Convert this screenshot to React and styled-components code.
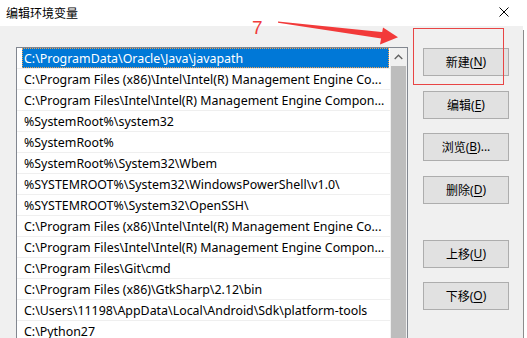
import React from "react";
import styled, { createGlobalStyle } from "styled-components";

const Global = createGlobalStyle`
  html, body { margin: 0; padding: 0; background: #ffffff; }
  body { font-family: "Noto Sans", "Noto Sans CJK SC", sans-serif; }
  * { box-sizing: border-box; }
`;

const Page = styled.div`
  position: relative;
  width: 527px;
  height: 338px;
  overflow: hidden;
  display: flex;
  flex-direction: column;
  font-family: "Noto Sans", "Noto Sans CJK SC", sans-serif;
  font-size: 12px;
  color: #000;
`;

const TitleBar = styled.div`
  height: 26px;
  flex: none;
  display: flex;
  align-items: center;
  justify-content: space-between;
  background: #ffffff;
  padding: 0 18px 2px 6px;
`;

const Title = styled.span`
  font-family: "Noto Sans CJK SC", sans-serif;
  font-size: 12px;
  color: #000;
`;

const Close = styled.svg`
  width: 10px;
  height: 10px;
  margin-top: -1px;
`;

const Main = styled.div`
  flex: 1;
  display: flex;
  min-height: 0;
`;

const Dialog = styled.div`
  flex: 1;
  background: #f0f0f0;
  display: flex;
  align-items: flex-start;
  padding: 21px 0 0 16px;
`;

const Strip = styled.div`
  width: 4px;
  flex: none;
  padding-top: 4px;
`;

const StripLine = styled.div`
  height: 100%;
  border-left: 1px solid #8c8c8c;
  background: #ffffff;
`;

const ListBox = styled.div`
  width: 392px;
  height: 340px;
  flex: none;
  border: 1px solid #828790;
  background: #ffffff;
  display: flex;
`;

const Rows = styled.div`
  flex: 1;
  display: flex;
  flex-direction: column;
  font-size: 12.4px;
`;

const Row = styled.div`
  height: 21px;
  flex: none;
  border-bottom: 1px solid #efefef;
  padding: 0 1px 0 5px;
  display: flex;
`;

const Label = styled.div`
  flex: 1;
  display: flex;
  align-items: center;
  padding-left: 2px;
  white-space: nowrap;
  overflow: hidden;
  background: ${(p) => (p.$selected ? "#0078d7" : "transparent")};
  color: ${(p) => (p.$selected ? "#ffffff" : "#000000")};
  outline: ${(p) => (p.$selected ? "1px dotted #f0a050" : "none")};
  outline-offset: -1px;
`;

const ScrollBar = styled.div`
  width: 17px;
  flex: none;
  background: #f0f0f0;
  display: flex;
  flex-direction: column;
  align-items: center;
`;

const ScrollArrow = styled.div`
  height: 18px;
  width: 100%;
  flex: none;
  display: flex;
  align-items: center;
  justify-content: center;
`;

const Thumb = styled.div`
  width: 15px;
  flex: 1;
  background: #bdbdbd;
`;

const Buttons = styled.div`
  display: flex;
  flex-direction: column;
  margin-left: 15px;
  padding-top: 1px;
`;

const Button = styled.button`
  width: 86px;
  height: 28px;
  margin-top: ${(p) => p.$gap || 0}px;
  border: 1px solid #adadad;
  background: #e1e1e1;
  font-family: "Noto Sans", "Noto Sans CJK SC", sans-serif;
  font-size: 12px;
  color: #000;
  padding: 0 0 1px;
  display: flex;
  align-items: center;
  justify-content: center;
  u { text-underline-offset: 2px; }
`;

const Overlay = styled.svg`
  position: absolute;
  left: 0;
  top: 0;
  width: 527px;
  height: 338px;
  pointer-events: none;
`;

const Seven = styled.span`
  position: absolute;
  left: 252px;
  top: 18px;
  font-family: "Liberation Sans", Arial, sans-serif;
  font-size: 19px;
  line-height: 1;
  color: #f03c3c;
`;

const Highlight = styled.div`
  position: absolute;
  left: 413px;
  top: 28px;
  width: 91px;
  height: 57px;
  border: 1px solid #e84545;
`;

const items = [
  "C:\\ProgramData\\Oracle\\Java\\javapath",
  "C:\\Program Files (x86)\\Intel\\Intel(R) Management Engine Co...",
  "C:\\Program Files\\Intel\\Intel(R) Management Engine Compon...",
  "%SystemRoot%\\system32",
  "%SystemRoot%",
  "%SystemRoot%\\System32\\Wbem",
  "%SYSTEMROOT%\\System32\\WindowsPowerShell\\v1.0\\",
  "%SYSTEMROOT%\\System32\\OpenSSH\\",
  "C:\\Program Files (x86)\\Intel\\Intel(R) Management Engine Co...",
  "C:\\Program Files\\Intel\\Intel(R) Management Engine Compon...",
  "C:\\Program Files\\Git\\cmd",
  "C:\\Program Files (x86)\\GtkSharp\\2.12\\bin",
  "C:\\Users\\11198\\AppData\\Local\\Android\\Sdk\\platform-tools",
  "C:\\Python27",
];

const buttons = [
  { label: "新建", key: "N", gap: 0 },
  { label: "编辑", key: "E", gap: 15 },
  { label: "浏览", key: "B", gap: 14, tail: "..." },
  { label: "删除", key: "D", gap: 15 },
  { label: "上移", key: "U", gap: 36 },
  { label: "下移", key: "O", gap: 14 },
];

export default function App() {
  return (
    <>
      <Global />
      <Page>
        <TitleBar>
          <Title>编辑环境变量</Title>
          <Close viewBox="0 0 10 10">
            <path d="M0.5 0.5 L9.5 9.5 M9.5 0.5 L0.5 9.5" stroke="#000" strokeWidth="1" />
          </Close>
        </TitleBar>
        <Main>
          <Dialog>
            <ListBox>
              <Rows>
                {items.map((t, i) => (
                  <Row key={i}>
                    <Label $selected={i === 0}>{t}</Label>
                  </Row>
                ))}
              </Rows>
              <ScrollBar>
                <ScrollArrow>
                  <svg width="9" height="6" viewBox="0 0 9 6">
                    <path d="M0.7 5 L4.5 1.2 L8.3 5" fill="none" stroke="#606060" strokeWidth="1.3" />
                  </svg>
                </ScrollArrow>
                <Thumb />
              </ScrollBar>
            </ListBox>
            <Buttons>
              {buttons.map((b) => (
                <Button key={b.key} $gap={b.gap}>
                  {b.label}(<u>{b.key}</u>){b.tail || ""}
                </Button>
              ))}
            </Buttons>
          </Dialog>
          <Strip>
            <StripLine />
          </Strip>
        </Main>
        <Seven>7</Seven>
        <Highlight />
        <Overlay viewBox="0 0 527 338">
          <polygon points="278,21.6 384,32.2 383,38.8 278,22.8" fill="#f23a3a" />
          <polygon points="383,27.5 398,37.2 380,44.5" fill="#f23a3a" />
        </Overlay>
      </Page>
    </>
  );
}
